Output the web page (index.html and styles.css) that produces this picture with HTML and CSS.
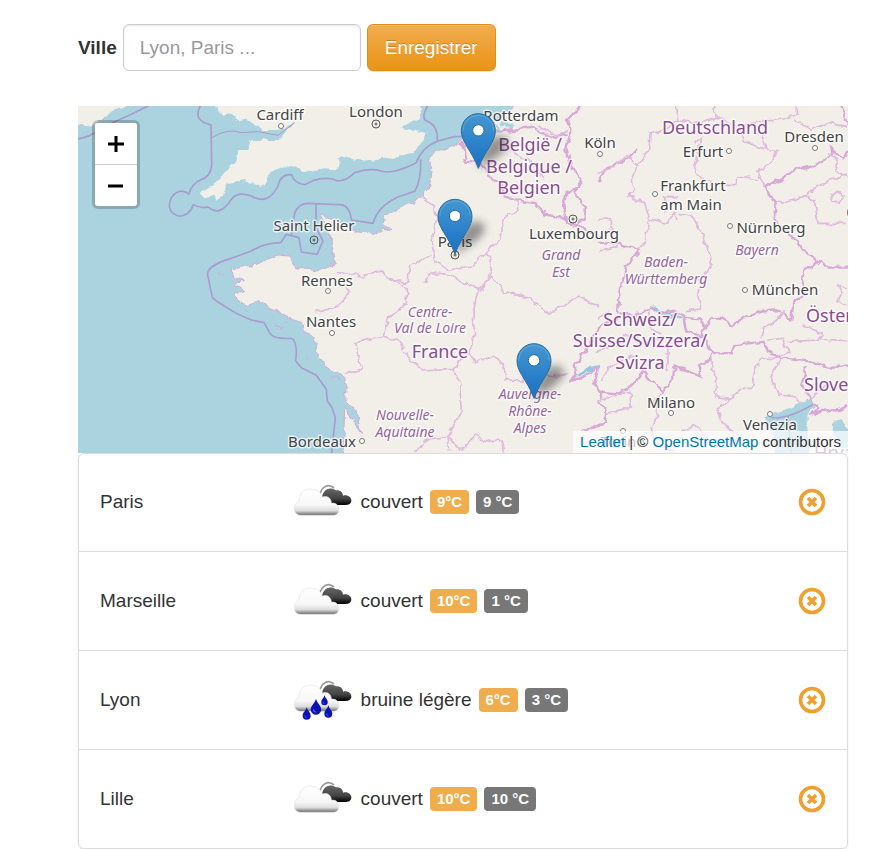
FILE: index.html
```html
<!DOCTYPE html>
<html lang="fr">
<head>
<meta charset="utf-8">
<meta name="viewport" content="width=device-width, initial-scale=1">
<title>Météo des villes</title>
<link rel="stylesheet" href="styles.css">
</head>
<body>
<svg class="defs" aria-hidden="true">
  <defs>
    <linearGradient id="cloud-light" x1="0" y1="0" x2="0" y2="1">
      <stop offset="0" stop-color="#fff"/><stop offset=".6" stop-color="#f8f8f8"/><stop offset=".82" stop-color="#ddd"/><stop offset="1" stop-color="#666"/>
    </linearGradient>
    <linearGradient id="cloud-dark" x1="0" y1="0" x2="0" y2="1">
      <stop offset="0" stop-color="#666"/><stop offset=".6" stop-color="#444"/><stop offset="1" stop-color="#000"/>
    </linearGradient>
    <linearGradient id="pin-fill" x1="0" y1="0" x2="0" y2="1">
      <stop offset="0" stop-color="#4597d1"/><stop offset="1" stop-color="#1a70c4"/>
    </linearGradient>
    <filter id="blur" x="-60%" y="-60%" width="220%" height="220%"><feGaussianBlur stdDeviation="12"/></filter>
    <filter id="rough" x="0" y="0" width="100%" height="100%">
      <feTurbulence type="fractalNoise" baseFrequency=".12" numOctaves="2" seed="4"/>
      <feDisplacementMap in="SourceGraphic" scale="7" xChannelSelector="R" yChannelSelector="G"/>
    </filter>
    <symbol id="clouds" viewBox="0 0 180 120" overflow="visible">
      <path d="M76 42C82 12 104 4 120 18" fill="none" stroke="#999" stroke-width="5"/>
      <path d="M84 44C90 20 108 14 126 25C136 23 147 30 147 41C160 37 174 46 172 58C170 68 160 70 150 69L116 69C108 58 100 46 90 46Z" fill="url(#cloud-dark)"/>
      <path d="M18 100C-5 98-4 64 15 57C14 34 34 18 54 22C70 22 82 33 85 46C98 38 113 49 112 64C128 60 138 76 134 88C132 96 126 100 118 100Z" fill="url(#cloud-light)" stroke="#e4e4e4" stroke-width="2"/>
    </symbol>
    <symbol id="drop" viewBox="-14 -20 28 40" overflow="visible">
      <path d="M0-20C3-8 13-3 13 7A13 13 0 0 1-13 7C-13-3-3-8 0-20Z" fill="#0a12b4"/>
      <path d="M-6 6Q-7 12 0 14" fill="none" stroke="#4b5cf0" stroke-width="3"/>
    </symbol>
    <symbol id="remove" viewBox="0 0 28 28">
      <circle cx="14" cy="14" r="11.5" fill="none" stroke="currentColor" stroke-width="3.6"/>
      <path d="M10 10l8 8M18 10l-8 8" stroke="currentColor" stroke-width="3.6"/>
    </symbol>
    <g id="pin">
      <path d="M0 0L12-50C40-105 75-110 90-80C90-50 35-20 0 0Z" fill="#000" opacity=".4" filter="url(#blur)"/>
      <path d="M0 0C-10-28-24-48-38-72C-46-86-51-98-51-113A51 51 0 0 1 51-113C51-98 46-86 38-72C24-48 10-28 0 0Z" fill="url(#pin-fill)" stroke="#2e6c97" stroke-width="3"/>
      <path d="M-46-113A46 46 0 0 1 46-113" fill="none" stroke="#70b1de" stroke-width="3" opacity=".6"/>
      <circle cy="-114" r="17" fill="#fff" stroke="#2e6c97" stroke-width="3"/>
    </g>
  </defs>
</svg>

<main class="page">
  <form class="city-form">
    <label for="city">Ville</label>
    <input id="city" type="text" placeholder="Lyon, Paris ...">
    <button type="button">Enregistrer</button>
  </form>

  <section class="map" aria-label="Carte">
    <svg class="map-canvas" viewBox="0 0 770 347" preserveAspectRatio="xMidYMid slice">
      <rect width="770" height="347" fill="#f2efe9"/>
      <g filter="url(#rough)">
        <rect width="770" height="347" fill="#f2efe9"/>
        <g transform="scale(.33333)">
          <path class="water coast" d="M-60-60H1420L1310 0L1270 40L1220 62L1160 97L1110 127L1060 142L1055 165L1062 200L1050 252L1020 282L920 327L915 362L940 367L890 382L830 377L780 342L725 327L750 372L765 432L775 472L720 492L650 482L630 450L600 447L540 472L460 492L465 515L500 522L470 537L500 557L465 565L500 597L540 587L600 617L640 637L670 647L675 672L705 687L715 712L710 732L740 777L780 802L800 817L805 847L800 880L835 920L850 985L835 960L800 900L795 1080L-60 1080Z"/>
          <path class="land" d="M-60-60H185L145 0L100 17L80 35L50 52L25 58L0 62L-60 70Z"/>
          <path class="land" d="M405-60L410 0L430 27L455 22L480 42L505 38L530 57L550 72L600 72L625 58L650 47L620 82L600 102L520 102L510 132L480 132L475 167L440 197L410 237L370 262L375 274L410 267L415 284L430 272L450 232L500 222L550 247L580 197L620 177L680 197L740 187L780 190L790 152L860 167L930 157L1000 142L1040 102L1045 77L970 67L990 52L1030 32L1020-60Z"/>
          <path class="water" d="M1270 45l35 8 2 22-18-8-25-5zM1245 55l30 20-15-2zM780 160l25-3-15 17z"/>
          <path class="water" d="M2060 932L2110 917L2160 895L2200 882L2210 900L2185 925L2195 1060H2090L2080 975L2065 955ZM2260 950l30-8 25 30v70l-30-20z"/>
          <path d="M1720 600l50 22 35 12-20 5-40-17M1500 808l40-25 24-3-2 9-34 5z" fill="#95c8df" stroke="#95c8df" stroke-width="5"/>
          <path class="coast" fill="none" d="M420 500l20 10M590 657l28 8-12 6zM620 650h10M685 750l10 10M760 815l20 4M500 615l16 6"/>
        </g>
      </g>

      <g transform="scale(.33333)">
        <g class="maritime">
          <path d="M-10 100Q30 95 60 75T160 25L220-5"/>
          <path d="M370-5Q345 35 380 50L399 57L401 180Q395 215 370 220Q340 235 333 264Q303 243 280 275Q262 315 300 330Q335 330 346 296Q365 308 390 303Q425 335 460 280Q480 255 520 270Q570 300 600 240Q608 203 640 206Q650 233 680 236L705 224Q750 210 780 225Q805 225 830 200Q870 185 910 195Q940 207 1015 170Q1030 125 1080 105L1130 92Q1200 90 1225 70"/>
          <path d="M1052-5Q1030 30 1042 43Q1080 55 1078 104"/>
          <path d="M1028 160Q1030 225 1010 256L960 273Q900 300 885 352L820 342Q815 293 780 296L690 292Q660 293 650 322L640 390"/>
          <path d="M714 292V365L735 405L717 445L670 438L663 395L625 385L608 410Q560 410 520 435L460 457Q380 480 390 512L403 575Q420 590 480 625L520 642L558 650L578 685Q590 700 640 697Q660 705 653 765L670 785L715 808L745 850L748 885L762 905L772 935L760 1050"/>
          <path d="M402 95Q450 65 490 80L540 77L600 88L650 50" stroke-width="3"/>
          <path d="M2080 935Q2130 940 2205 895M2130 930l10 120" stroke-width="4"/>
        </g>
      </g>

      <g filter="url(#rough)">
        <g transform="scale(.33333)">
          <g class="state" transform="translate(780 -18)">
            <path d="M370 125L385 185L430 190L465 240L490 250L500 290L530 300L590 310L620 345L670 350L690 370L720 375L760 400"/>
            <path d="M730 18L690 60L700 90L685 145L700 200L730 240L710 280L740 320V355L715 375M720 260L685 280L675 320L685 370M470 95L530 90L580 80L640 110L690 100M430 110L470 95"/>
            <path d="M780 250L800 210L860 180L900 150"/>
          </g>
          <g class="state" transform="translate(1560 -18)">
            <path d="M750 155L735 175L700 145L705 165L640 200L590 210L540 240L500 265L520 295L535 325L530 360L585 410L610 445L655 480L680 500L750 500M730 18L750 70"/>
            <path d="M655 480L640 505L620 510L610 540M0 425L65 432L125 450L85 500L65 570L60 640"/>
          </g>
          <g class="state" transform="translate(1560 507)">
            <path d="M65 115L120 120L155 95L190 115L230 110L260 125L300 130L325 155L340 125L380 130L400 150L440 130L490 110L545 105L580 135L585 85L620 60L610 0"/>
            <path d="M325 150L310 170L340 230L400 235L410 210L500 200L510 230L550 250L640 260L690 275L750 275M340 230L335 260L300 270L310 305L270 290L230 275L225 310L195 350L150 310L140 285L100 335L60 355L0 350M620 270V300L610 330L640 370L660 400L640 415L720 405L750 390M255 120L265 170L325 190M0 375L25 410L20 445L-50 470"/>
          </g>
          <g class="state" transform="translate(780 507)">
            <path d="M840 130L790 150L740 230L710 270L715 300L695 320L720 310L780 280L770 320L790 370"/>
          </g>
          <g class="region">
            <path d="M1020 270L1070 300L1075 340L1060 420L1075 470L1110 490L1180 480L1225 440L1245 420L1270 390L1275 340L1320 310L1315 280M1225 440L1240 475L1230 520L1210 550M780 500L850 510L910 495L930 520L990 530L995 480L1060 450M930 520L985 545L985 590L930 640L915 690L830 710L850 790L800 805M915 690L960 705L1000 765L1035 795L1125 790L1160 750L1175 740L1190 770L1245 750L1275 775L1280 820L1330 825L1345 800M1175 740L1190 690L1185 620L1200 550L1240 510L1280 560L1350 575L1410 625L1470 590L1500 570L1560 600M1125 790L1145 830L1150 920L1110 990L1115 1040M1110 990L1050 1000L1010 1040M1110 990L1150 1030L1190 990L1240 1010L1265 995L1280 1040M1345 800L1430 810L1470 800M1210 550L1150 530L1110 505L1060 500L1040 530M709 617L750 610L790 595L810 560L800 530M1280 120L1320 150L1370 170L1400 220M1380 60L1440 90L1470 70"/>
          </g>
          <g class="region" transform="translate(1560 -18)">
            <path d="M235 18L240 60L200 90L160 100L155 150L115 195L85 165L50 200L0 220M115 195L100 240L110 270L90 290L140 305L155 360L205 370L230 340L240 360M155 360L145 420L125 450M240 290L200 290L205 340M350 18L355 55L300 70L240 60M355 55L420 80L480 65L540 60L595 45V18M425 100L440 125L505 150L540 155L515 190L480 215L490 240L500 265M490 100L505 150M290 130L310 110L290 190L300 230L340 245L410 255L420 230L480 240M240 340L285 350L310 400L335 460L340 490L310 540M0 355L40 360V400M0 450L60 440M535 310L615 290L650 300L660 370H740M615 290L660 255L710 235L750 225M700 285l20-12 18 15-15 15-20 3zM690 160L720 180L710 210L750 230M590 60L640 90L690 70L750 80"/>
          </g>
          <g class="region" transform="translate(1560 507)">
            <path d="M305 0L300 60L310 105L265 110M340 235L345 290L355 340L350 365L400 370L430 340L460 340L470 290L490 250L550 250L520 300L540 360L590 365L610 390M400 370L360 400L370 440L400 470L410 520M195 350L170 380L180 430L160 460L170 500L230 530M0 130L30 110M0 230L40 210L80 180L130 200L200 190M10 320L35 280L80 250L120 240M500 160L540 130L560 105M500 160L490 190M510 195L550 190L570 230L550 245M570 200L660 195L670 180L650 160L610 150M660 195L750 200M720 30L750 40M720 30L730 60L720 80L750 90M150 95L160 160L190 180M210 290V200L250 185M0 375L95 350L100 400L25 415M250 470L290 450L340 500M640 370L680 330"/>
          </g>
        </g>
      </g>

      <g class="town-dots">
        <circle cx="203" cy="20" r="2.5"/><circle cx="522" cy="48" r="2.5"/><circle cx="651" cy="45" r="2.5"/><circle cx="737" cy="42" r="2.5"/><circle cx="577" cy="88" r="2.5"/><circle cx="652" cy="120" r="2.5"/><circle cx="250" cy="185" r="2.5"/><circle cx="254" cy="227" r="2.5"/><circle cx="284" cy="335" r="2.5"/><circle cx="667" cy="184" r="2.5"/><circle cx="593" cy="307" r="2.5"/><circle cx="692" cy="308" r="2.5"/><circle cx="545" cy="325" r="2.5"/>
      </g>
      <g class="capital-dots">
        <circle cx="298" cy="18" r="4"/><circle cx="236" cy="134" r="4"/><circle cx="495" cy="113" r="4"/><circle cx="377" cy="149" r="4"/>
        <circle cx="298" cy="18" r="1"/><circle cx="236" cy="134" r="1"/><circle cx="495" cy="113" r="1"/><circle cx="377" cy="149" r="1"/>
      </g>
      <g class="town">
        <text x="202" y="14">Cardiff</text><text x="298" y="11">London</text><text x="443" y="15">Rotterdam</text><text x="522" y="42">Köln</text><text x="625" y="51">Erfurt</text><text x="736" y="36">Dresden</text><text x="615" y="85">Frankfurt</text><text x="613" y="104">am Main</text><text x="693" y="127">Nürnberg</text><text x="496" y="133">Luxembourg</text><text x="236" y="125">Saint Helier</text><text x="377" y="141">Paris</text><text x="249" y="180">Rennes</text><text x="253" y="221">Nantes</text><text x="244" y="341">Bordeaux</text><text x="707" y="189">München</text><text x="593" y="302">Milano</text><text x="692" y="324">Venezia</text><text x="545" y="341">Torino</text>
      </g>
      <g class="country">
        <text x="452" y="45">België /</text><text x="451" y="67">Belgique /</text><text x="451" y="88">Belgien</text><text x="637" y="28">Deutschland</text><text x="362" y="252">France</text><text x="562" y="220">Schweiz/</text><text x="562" y="241">Suisse/Svizzera/</text><text x="562" y="263">Svizra</text>
        <text class="from-start" x="728" y="216">Österreich</text><text class="from-start" x="726" y="285">Slovenija</text><text class="from-start" x="768" y="113">Česko</text><text class="from-start" x="736" y="353">Hrvatska</text>
      </g>
      <g class="province">
        <text x="352" y="211">Centre-</text><text x="352" y="227">Val de Loire</text><text x="483" y="154">Grand</text><text x="483" y="171">Est</text><text x="588" y="161">Baden-</text><text x="588" y="178">Württemberg</text><text x="679" y="149">Bayern</text><text x="327" y="314">Nouvelle-</text><text x="327" y="331">Aquitaine</text><text x="452" y="293">Auvergne-</text><text x="452" y="310">Rhône-</text><text x="452" y="327">Alpes</text>
      </g>
      <g transform="scale(.33333)">
        <use href="#pin" x="1201" y="187"/><use href="#pin" x="1131" y="444"/><use href="#pin" x="1368" y="877"/>
      </g>
    </svg>
    <div class="zoom-control">
      <button type="button" aria-label="Zoom avant"><svg viewBox="0 0 18 18"><path d="M1 9h16M9 1v16"/></svg></button>
      <button type="button" aria-label="Zoom arrière"><svg viewBox="0 0 18 18"><path d="M1 9h15"/></svg></button>
    </div>
    <div class="attribution"><a href="#leaflet">Leaflet</a> | © <a href="#osm">OpenStreetMap</a> contributors</div>
  </section>

  <ul class="city-list">
    <li>
      <span>Paris</span>
      <div class="weather">
        <svg class="weather-icon" viewBox="0 0 180 120"><use href="#clouds" width="180" height="120"/></svg>
        <span>couvert</span><span class="badge high">9°C</span><span class="badge low">9 °C</span>
      </div>
      <button class="remove" type="button" aria-label="Supprimer Paris"><svg><use href="#remove"/></svg></button>
    </li>
    <li>
      <span>Marseille</span>
      <div class="weather">
        <svg class="weather-icon" viewBox="0 0 180 120"><use href="#clouds" width="180" height="120"/></svg>
        <span>couvert</span><span class="badge high">10°C</span><span class="badge low">1 °C</span>
      </div>
      <button class="remove" type="button" aria-label="Supprimer Marseille"><svg><use href="#remove"/></svg></button>
    </li>
    <li>
      <span>Lyon</span>
      <div class="weather">
        <svg class="weather-icon" viewBox="0 0 180 120">
          <use href="#clouds" y="-6" width="180" height="120"/>
          <use href="#drop" x="25" y="82" width="26" height="37"/><use href="#drop" x="49" y="56" width="34" height="48"/><use href="#drop" x="81" y="46" width="21" height="30"/><use href="#drop" x="90" y="76" width="26" height="37"/>
        </svg>
        <span>bruine légère</span><span class="badge high">6°C</span><span class="badge low">3 °C</span>
      </div>
      <button class="remove" type="button" aria-label="Supprimer Lyon"><svg><use href="#remove"/></svg></button>
    </li>
    <li>
      <span>Lille</span>
      <div class="weather">
        <svg class="weather-icon" viewBox="0 0 180 120"><use href="#clouds" width="180" height="120"/></svg>
        <span>couvert</span><span class="badge high">10°C</span><span class="badge low">10 °C</span>
      </div>
      <button class="remove" type="button" aria-label="Supprimer Lille"><svg><use href="#remove"/></svg></button>
    </li>
  </ul>
</main>
</body>
</html>
```
FILE: styles.css
```css
* { box-sizing: border-box; }

body {
  margin: 0;
  background: #fff;
  color: #333;
  font: 19px/28px "Liberation Sans", Arial, sans-serif;
}

.defs { position: absolute; width: 0; height: 0; }

.page { padding: 24px 44px 0 78px; }

.city-form {
  display: flex;
  align-items: center;
  gap: 6px;
  margin-bottom: 35px;
}

.city-form label { font-weight: bold; }

.city-form input,
.city-form button {
  height: 47px;
  border-radius: 6px;
  font: inherit;
}

.city-form input {
  width: 238px;
  padding: 0 16px;
  border: 1px solid #ccc;
  background: #fff;
  color: #555;
  box-shadow: inset 0 1px 2px rgba(0, 0, 0, .1);
}

.city-form input::placeholder { color: #999; opacity: 1; }

.city-form button {
  padding: 0 17px;
  border: 1px solid #e38d13;
  background: linear-gradient(#f0ad4e, #eb9316);
  color: #fff;
  text-shadow: 0 -1px 0 rgba(0, 0, 0, .2);
  box-shadow: inset 0 1px 0 rgba(255, 255, 255, .15), 0 1px 1px rgba(0, 0, 0, .1);
}

.map {
  position: relative;
  height: 347px;
  overflow: hidden;
}

.map-canvas { display: block; width: 100%; height: 100%; }

.water { fill: #aad3df; }
.land { fill: #f2efe9; }
.coast { stroke: #cfaed6; stroke-width: 3; }
.maritime { fill: none; stroke: #a99bd0; stroke-width: 5; stroke-linejoin: round; }
.state { fill: none; stroke: #d8a8d6; stroke-width: 7; }
.region { fill: none; stroke: #e0bade; stroke-width: 5; }

.town-dots { fill: #fff; stroke: #777; }
.capital-dots { fill: none; stroke: #555; }

.town, .country, .province {
  font-family: "Noto Sans", sans-serif;
  text-anchor: middle;
  paint-order: stroke;
  stroke: rgba(255, 255, 255, .7);
  stroke-width: 3px;
  stroke-linejoin: round;
}

.town { font-size: 15px; fill: #444; }
.country { font-size: 18px; fill: #8a4c8f; }
.province { font-size: 14px; font-style: italic; fill: #96669b; }
.from-start { text-anchor: start; }

.zoom-control {
  position: absolute;
  top: 14px;
  left: 14px;
  display: grid;
  gap: 1px;
  border: 3px solid rgba(0, 0, 0, .2);
  border-radius: 6px;
  background: #ccc;
  background-clip: padding-box;
}

.zoom-control button {
  display: grid;
  place-items: center;
  width: 42px;
  height: 41px;
  padding: 0;
  border: 0;
  background: #fff;
}

.zoom-control button:first-child { border-radius: 3px 3px 0 0; }
.zoom-control button:last-child { border-radius: 0 0 3px 3px; }

.zoom-control svg {
  width: 18px;
  height: 18px;
  stroke: #000;
  stroke-width: 3;
}

.attribution {
  position: absolute;
  right: 0;
  bottom: 0;
  padding: 0 7px;
  background: rgba(255, 255, 255, .7);
  font-size: 15px;
  line-height: 22px;
}

.attribution a { color: #0078a8; text-decoration: none; }

.city-list {
  margin: 0;
  padding: 0;
  list-style: none;
  border-radius: 6px;
  box-shadow: 0 1px 2px rgba(0, 0, 0, .1);
}

.city-list li {
  display: grid;
  grid-template-columns: 4fr 11fr 28px;
  column-gap: 16px;
  align-items: center;
  padding: 28px 21px 29px;
  border: 1px solid #ddd;
}

.city-list li + li { margin-top: -1px; padding-top: 29px; }
.city-list li:first-child { border-radius: 6px 6px 0 0; }
.city-list li:last-child { border-radius: 0 0 6px 6px; }

.weather { display: flex; align-items: center; gap: 7px; }

.weather-icon { width: 60px; height: 40px; overflow: visible; }

.badge {
  padding: 0 7px;
  border-radius: 4px;
  color: #fff;
  font-size: 15px;
  font-weight: bold;
  line-height: 24px;
}

.high { background: #f0ad4e; }
.low { background: #777; }

.remove {
  width: 28px;
  height: 28px;
  padding: 0;
  border: 0;
  background: none;
  color: #f0a02e;
}

.remove svg { display: block; width: 28px; height: 28px; }
```
